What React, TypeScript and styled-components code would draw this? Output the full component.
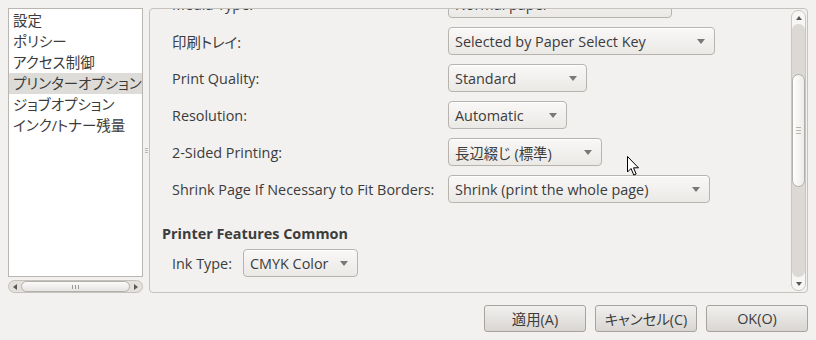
import styled, { createGlobalStyle } from "styled-components";

const GlobalStyle = createGlobalStyle`
  html, body {
    margin: 0;
    background: #f2f1f0;
  }
  body {
    font-family: "Open Sans", "Noto Sans CJK JP", sans-serif;
    font-size: 14.4px;
    font-feature-settings: "palt";
    color: #3c3c3c;
  }
`;

const Window = styled.div`
  position: relative;
  width: 816px;
  height: 340px;
  padding: 8px 8px 0 8px;
  box-sizing: border-box;
  display: flex;
  flex-direction: column;
`;

const Main = styled.div`
  display: flex;
  height: 285px;
`;

const Sidebar = styled.div`
  width: 135px;
  display: flex;
  flex-direction: column;
`;

const List = styled.ul`
  flex: 1;
  margin: 0;
  padding: 1px 0 0;
  list-style: none;
  background: #ffffff;
  border: 1px solid #b9b5b0;
  overflow: hidden;
`;

const ListItem = styled.li<{ selected?: boolean }>`
  height: 21px;
  line-height: 21px;
  padding-left: 4px;
  font-size: 14.5px;
  white-space: nowrap;
  background: ${(p) => (p.selected ? "#dedcd8" : "transparent")};
`;

const HScroll = styled.div`
  margin-top: 3px;
  height: 13px;
  border: 1px solid #c5c1bc;
  border-radius: 7px;
  background: #e4e1dd;
  display: flex;
  align-items: center;
  box-sizing: border-box;
`;

const Arrow = styled.div`
  width: 12px;
  display: flex;
  justify-content: center;
  align-items: center;
`;

const HThumb = styled.div`
  flex: 1;
  height: 11px;
  border: 1px solid #b3afaa;
  border-radius: 6px;
  background: linear-gradient(#fbfbfa, #e6e4e1);
  box-sizing: border-box;
  display: flex;
  justify-content: center;
  align-items: center;
  gap: 2px;
`;

const GripV = styled.span`
  width: 1px;
  height: 4px;
  background: #9c9893;
`;

const Handle = styled.div`
  width: 6px;
  display: flex;
  flex-direction: column;
  justify-content: center;
  align-items: center;
  gap: 1px;
`;

const GripH = styled.span<{ w?: number }>`
  width: ${(p) => p.w ?? 3}px;
  height: 1px;
  background: #b8b4af;
`;

const Panel = styled.div`
  flex: 1;
  border: 1px solid #c6c2bd;
  border-radius: 4px;
  display: flex;
  overflow: hidden;
`;

const Content = styled.div`
  flex: 1;
  overflow: hidden;
  padding: 0 12px;
`;

const Scrolled = styled.div`
  margin-top: -19px;
`;

const FormGrid = styled.div<{ labelWidth: number }>`
  display: grid;
  grid-template-columns: ${(p) => p.labelWidth}px auto;
  row-gap: 9px;
  align-items: center;
  justify-items: start;
  padding-left: 10px;
`;

const Label = styled.span`
  white-space: nowrap;
`;

const Combo = styled.div<{ w: number }>`
  width: ${(p) => p.w}px;
  height: 28px;
  box-sizing: border-box;
  border: 1px solid #b7b3ae;
  border-radius: 4px;
  background: linear-gradient(#f9f8f7, #ebe9e6);
  box-shadow: inset 0 1px 0 #ffffff;
  display: flex;
  align-items: center;
  justify-content: space-between;
  padding: 0 9px 0 6px;
  white-space: nowrap;
`;

const Caret = styled.span`
  width: 0;
  height: 0;
  border-left: 4px solid transparent;
  border-right: 4px solid transparent;
  border-top: 5px solid #7a7875;
`;

const Heading = styled.div`
  font-weight: bold;
  margin: 22px 0 6px;
  line-height: 18px;
`;

const VScroll = styled.div`
  width: 15px;
  margin: 1px 1px 1px 0;
  border: 1px solid #c9c5c0;
  border-radius: 7px;
  background: #f7f6f5;
  display: flex;
  flex-direction: column;
  box-sizing: border-box;
`;

const VArrow = styled.div`
  height: 13px;
  display: flex;
  justify-content: center;
  align-items: center;
`;

const Trough = styled.div`
  flex: 1;
  background: #dcd9d5;
  border-radius: 6px;
  padding-top: 50px;
  padding-bottom: 90px;
  display: flex;
  flex-direction: column;
`;

const VThumb = styled.div`
  flex: 1;
  border: 1px solid #b3afaa;
  border-radius: 7px;
  background: linear-gradient(90deg, #fdfdfc, #eeecea);
  display: flex;
  flex-direction: column;
  justify-content: center;
  align-items: center;
  gap: 2px;
`;

const Buttons = styled.div`
  display: flex;
  justify-content: flex-end;
  gap: 9px;
  margin-top: 12px;
`;

const Button = styled.button`
  width: 102px;
  height: 27px;
  border: 1px solid #a7a39e;
  border-radius: 3px;
  background: linear-gradient(#f1f0ef, #d9d6d2);
  font: inherit;
  font-size: 14.4px;
  color: #3c3c3c;
  padding: 0;
`;

const Pointer = styled.svg`
  position: absolute;
  left: 627px;
  top: 156px;
`;

const Tri = ({ dir }: { dir: "up" | "down" | "left" | "right" }) => {
  const pts = {
    up: "0,4 3,0 6,4",
    down: "0,0 6,0 3,4",
    left: "4,0 4,6 0,3",
    right: "0,0 4,3 0,6",
  }[dir];
  const horiz = dir === "left" || dir === "right";
  return (
    <svg width={horiz ? 4 : 6} height={horiz ? 6 : 4}>
      <polygon points={pts} fill="#5a5855" />
    </svg>
  );
};

const rows = [
  { label: "Media Type:", value: "Normal paper", w: 224 },
  { label: "印刷トレイ:", value: "Selected by Paper Select Key", w: 267 },
  { label: "Print Quality:", value: "Standard", w: 139 },
  { label: "Resolution:", value: "Automatic", w: 119 },
  { label: "2-Sided Printing:", value: "長辺綴じ (標準)", w: 154 },
  { label: "Shrink Page If Necessary to Fit Borders:", value: "Shrink (print the whole page)", w: 262 },
];

const sections = ["設定", "ポリシー", "アクセス制御", "プリンターオプション", "ジョブオプション", "インク/トナー残量"];

export default function App() {
  return (
    <>
      <GlobalStyle />
      <Window>
        <Main>
          <Sidebar>
            <List>
              {sections.map((s) => (
                <ListItem key={s} selected={s === "プリンターオプション"}>
                  {s}
                </ListItem>
              ))}
            </List>
            <HScroll>
              <Arrow>
                <Tri dir="left" />
              </Arrow>
              <HThumb>
                <GripV />
                <GripV />
                <GripV />
              </HThumb>
              <Arrow>
                <Tri dir="right" />
              </Arrow>
            </HScroll>
          </Sidebar>
          <Handle>
            <GripH />
            <GripH />
            <GripH />
          </Handle>
          <Panel>
            <Content>
              <Scrolled>
                <FormGrid labelWidth={276}>
                  {rows.map((r) => (
                    <>
                      <Label key={r.label}>{r.label}</Label>
                      <Combo key={r.value} w={r.w}>
                        {r.value}
                        <Caret />
                      </Combo>
                    </>
                  ))}
                </FormGrid>
                <Heading>Printer Features Common</Heading>
                <FormGrid labelWidth={71}>
                  <Label>Ink Type:</Label>
                  <Combo w={115}>
                    CMYK Color
                    <Caret />
                  </Combo>
                </FormGrid>
              </Scrolled>
            </Content>
            <VScroll>
              <VArrow>
                <Tri dir="up" />
              </VArrow>
              <Trough>
                <VThumb>
                  <GripH w={5} />
                  <GripH w={5} />
                  <GripH w={5} />
                </VThumb>
              </Trough>
              <VArrow>
                <Tri dir="down" />
              </VArrow>
            </VScroll>
          </Panel>
        </Main>
        <Buttons>
          <Button>適用(A)</Button>
          <Button>キャンセル(C)</Button>
          <Button>OK(O)</Button>
        </Buttons>
        <Pointer width="13" height="21" viewBox="0 0 13 21">
          <path d="M0.5 0.5 L0.5 16 L4 12.5 L6.8 19 L9.2 18 L6.5 11.8 L11.5 11.8 Z" fill="#ffffff" stroke="#000000" strokeWidth="1" strokeLinejoin="round" />
        </Pointer>
      </Window>
    </>
  );
}
